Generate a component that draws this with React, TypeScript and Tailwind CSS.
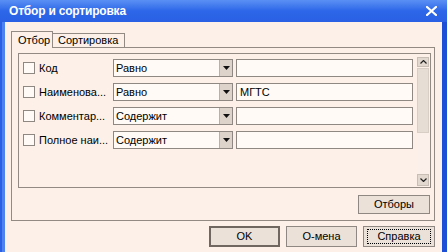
import React from "react";

type FilterRow = {
  label: string;
  mode: string;
  value: string;
};

const rows: FilterRow[] = [
  { label: "Код", mode: "Равно", value: "" },
  { label: "Наименова...", mode: "Равно", value: "МГТС" },
  { label: "Комментар...", mode: "Содержит", value: "" },
  { label: "Полное наи...", mode: "Содержит", value: "" },
];

const font = { fontFamily: '"Liberation Sans", Arial, sans-serif' };

function ComboBox({ text }: { text: string }) {
  return (
    <div className="flex h-[18px] w-[120px] border border-[#8e8782] bg-[#fffaf6]">
      <div className="flex flex-1 items-center pl-[2px] text-[11px] leading-none text-black">
        {text}
      </div>
      <div className="flex w-[13px] items-center justify-center border-l border-[#b9afa7] bg-[#ddd3cb]">
        <svg width="7" height="4" viewBox="0 0 7 4">
          <path d="M0 0 H7 L3.5 4 Z" fill="#111" />
        </svg>
      </div>
    </div>
  );
}

function CheckBox() {
  return <div className="h-[12px] w-[12px] border border-[#8e8782] bg-[#fffaf6]" />;
}

function Row({ row }: { row: FilterRow }) {
  return (
    <div className="flex h-[18px] items-center">
      <CheckBox />
      <div className="ml-[4px] w-[74px] overflow-hidden whitespace-nowrap text-[11px] leading-none text-black">
        {row.label}
      </div>
      <ComboBox text={row.mode} />
      <div className="ml-[3px] flex h-[18px] w-[177px] items-center border border-[#8e8782] bg-[#fffaf6] pl-[3px] text-[11px] leading-none text-black">
        {row.value}
      </div>
    </div>
  );
}

function ScrollBar() {
  return (
    <div className="mb-[1px] mt-[3px] flex w-[12px] flex-col">
      <div className="flex h-[10px] items-center justify-center border border-[#c9beb5] bg-[#e2d8d0]">
        <svg width="7" height="4" viewBox="0 0 7 4">
          <path d="M0.5 3.5 L3.5 0.5 L6.5 3.5" stroke="#222" strokeWidth="1.2" fill="none" />
        </svg>
      </div>
      <div className="mt-[1px] h-[65px] border border-[#d8cec6] bg-[#e6ddd5]" />
      <div className="flex-1 bg-[#fbf1ea]" />
      <div className="flex h-[12px] items-center justify-center border border-[#c9beb5] bg-[#e2d8d0]">
        <svg width="7" height="4" viewBox="0 0 7 4">
          <path d="M0.5 0.5 L3.5 3.5 L6.5 0.5" stroke="#222" strokeWidth="1.2" fill="none" />
        </svg>
      </div>
    </div>
  );
}

function Button({
  label,
  width,
  isDefault,
  focused,
}: {
  label: string;
  width: string;
  isDefault?: boolean;
  focused?: boolean;
}) {
  return (
    <div
      className={`flex h-[21px] ${width} items-center justify-center bg-[#ebe1d9] text-[11px] leading-none text-black ${
        isDefault ? "border-2 border-[#6f6760]" : "border border-[#8e8782]"
      }`}
    >
      {focused ? (
        <div className="flex h-[15px] w-[calc(100%-6px)] items-center justify-center border border-dotted border-black">
          {label}
        </div>
      ) : (
        label
      )}
    </div>
  );
}

export default function App() {
  return (
    <div className="flex h-[252px] w-[447px] flex-col overflow-hidden bg-[#2a5fe2]" style={font}>
      {/* title bar */}
      <div className="flex h-[22px] items-center bg-linear-to-b from-[#5a90f4] via-[#2d66e8] to-[#2a61e4] pl-[9px] pr-[10px]">
        <span className="text-[12px] font-bold tracking-[-0.2px] text-white">Отбор и сортировка</span>
        <svg className="ml-auto" width="11" height="10" viewBox="0 0 11 10">
          <path d="M1 1 L10 9 M10 1 L1 9" stroke="#fff" strokeWidth="2.2" strokeLinecap="square" />
        </svg>
      </div>

      <div className="flex flex-1">
        <div className="w-[2px] bg-[#2c60e4]" />
        <div className="w-[3px] bg-[#4c82f2]" />

        {/* dialog body */}
        <div className="flex flex-1 flex-col bg-[#fcf0e8] pl-[6px] pr-[7px] pt-[9px]">
          {/* tabs */}
          <div className="flex h-[16px] items-end text-[11px] leading-none text-black">
            <div className="relative z-10 -mb-px flex h-[17px] w-[42px] items-center border border-b-0 border-[#938a84] bg-[#fcf0e8] pl-[6px]">
              Отбор
            </div>
            <div className="flex h-[14px] w-[72px] items-center border-r border-t border-[#938a84] pl-[5px]">
              Сортировка
            </div>
          </div>

          {/* tab panel */}
          <div className="flex h-[174px] flex-col border border-[#938a84]">
            <div className="ml-[6px] mr-[3px] mt-[5px] flex h-[135px] border border-[#938a84]">
              <div className="flex flex-1 flex-col gap-[6px] pl-[4px] pt-[5px]">
                {rows.map((row) => (
                  <Row key={row.label} row={row} />
                ))}
              </div>
              <ScrollBar />
              <div className="w-[1px]" />
            </div>
            <div className="mr-[4px] mt-[7px] flex justify-end">
              <div className="flex h-[19px] w-[72px] items-center justify-center border border-[#8e8782] bg-[#ebe1d9] text-[11px] leading-none text-black">
                Отборы
              </div>
            </div>
          </div>

          {/* dialog buttons */}
          <div className="mt-[5px] flex justify-end gap-[6px]">
            <Button label="OK" width="w-[71px]" isDefault />
            <Button label="О-мена" width="w-[71px]" />
            <Button label="Справка" width="w-[72px]" focused />
          </div>
        </div>

        <div className="w-[5px] bg-[#1d4fd6]" />
      </div>
    </div>
  );
}
